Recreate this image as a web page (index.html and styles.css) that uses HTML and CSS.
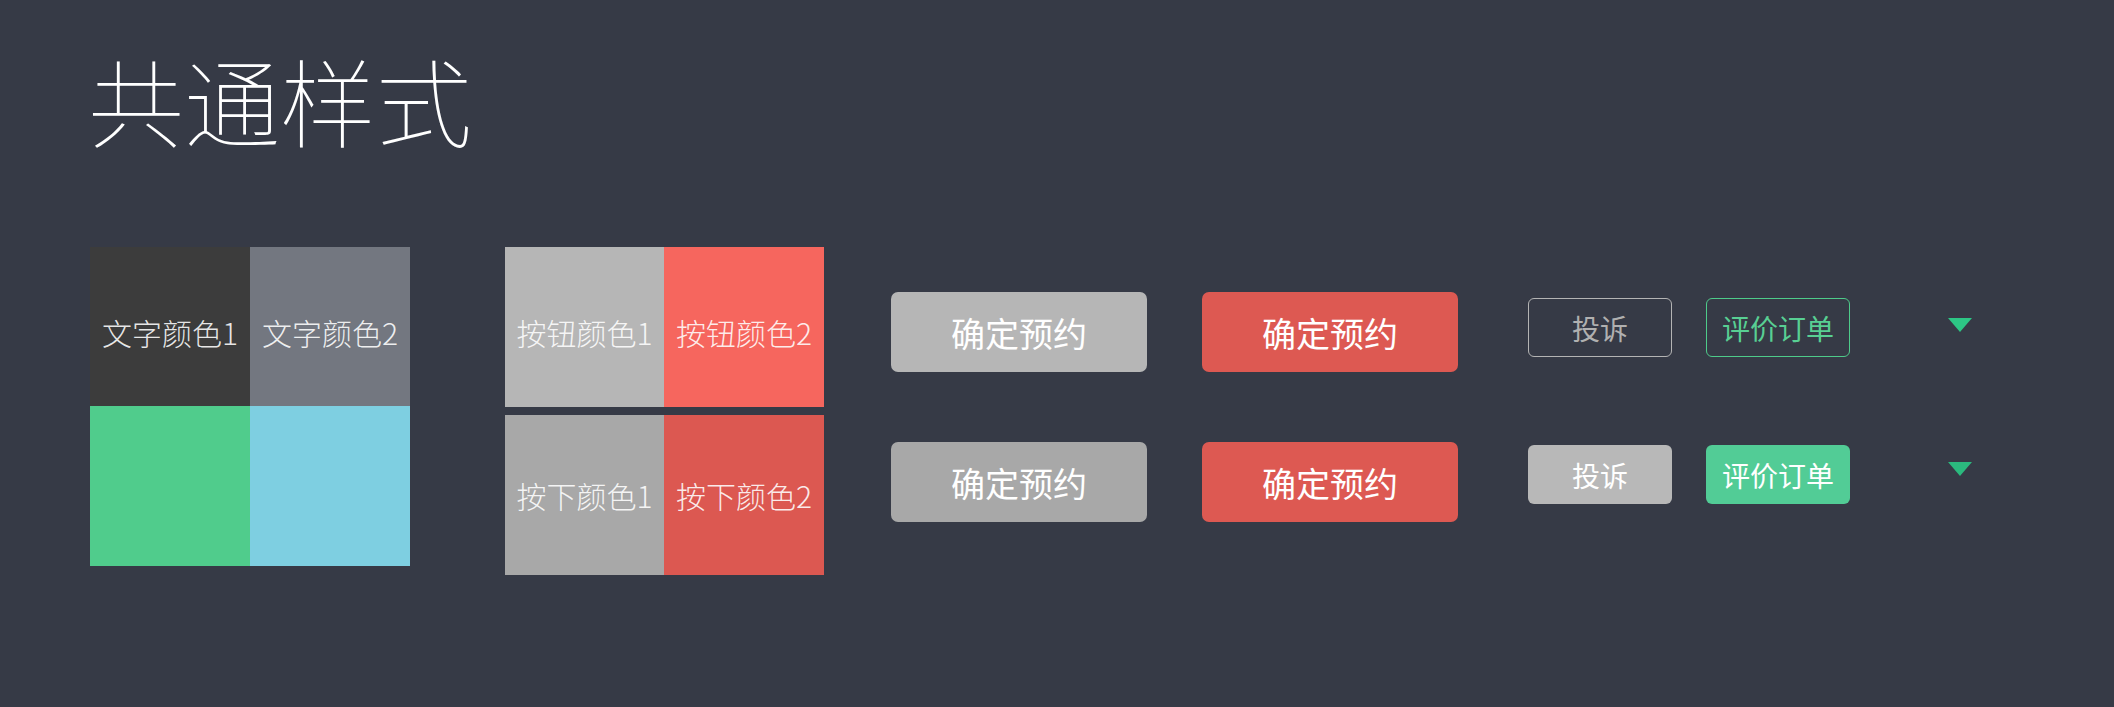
FILE: index.html
```html
<!DOCTYPE html>
<html lang="zh-CN">
<head>
<meta charset="utf-8">
<title>共通样式</title>
<link rel="stylesheet" href="styles.css">
</head>
<body>
<main class="page">
  <h1 class="title">共通样式</h1>
  <div class="board">
    <div class="swatches text-swatches">
      <div class="cell c-text1"><span>文字颜色1</span></div>
      <div class="cell c-text2"><span>文字颜色2</span></div>
      <div class="cell c-green"></div>
      <div class="cell c-blue"></div>
    </div>
    <div class="swatches btn-swatches">
      <div class="cell c-btn1 top"><span>按钮颜色1</span></div>
      <div class="cell c-btn2 top"><span>按钮颜色2</span></div>
      <div class="cell c-press1"><span>按下颜色1</span></div>
      <div class="cell c-press2"><span>按下颜色2</span></div>
    </div>
    <div class="actions">
      <div class="action-row">
        <button class="btn btn-gray">确定预约</button>
        <button class="btn btn-red">确定预约</button>
        <button class="chip chip-line-gray">投诉</button>
        <button class="chip chip-line-green">评价订单</button>
        <span class="caret"></span>
      </div>
      <div class="action-row pressed">
        <button class="btn btn-gray-dark">确定预约</button>
        <button class="btn btn-red">确定预约</button>
        <button class="chip chip-fill-gray">投诉</button>
        <button class="chip chip-fill-green">评价订单</button>
        <span class="caret caret-dark"></span>
      </div>
    </div>
  </div>
</main>
</body>
</html>
```

FILE: styles.css
```css
html, body {
  margin: 0;
  padding: 0;
  background: #363a46;
}

body {
  font-family: "Noto Sans CJK SC", "Noto Sans", sans-serif;
  color: #ffffff;
  width: 2114px;
  height: 707px;
  overflow: hidden;
}

.page {
  padding: 49px 0 0 88px;
}

.title {
  margin: 0;
  font-size: 96px;
  line-height: 100px;
  font-weight: 100;
  color: #ffffff;
  letter-spacing: 0;
}

.board {
  display: flex;
  align-items: flex-start;
  margin-top: 98px;
  margin-left: 2px;
}

.swatches {
  display: grid;
  grid-template-columns: 160px 160px;
}

.text-swatches {
  grid-template-rows: 159px 160px;
}

.btn-swatches {
  margin-left: 95px;
  grid-template-columns: 159px 160px;
  grid-template-rows: 160px 160px;
  row-gap: 8px;
}

.cell {
  display: flex;
  align-items: center;
  justify-content: center;
  font-size: 30px;
  font-weight: 300;
  color: rgba(255, 255, 255, 0.88);
  white-space: nowrap;
}

.text-swatches .cell span,
.btn-swatches .top span {
  padding-top: 10px;
}

.c-text1 { background: #3c3c3c; }
.c-text2 { background: #737780; }
.c-green { background: #50cc8c; }
.c-blue { background: #7ecfe1; }
.c-btn1 { background: #b6b6b6; }
.c-btn2 { background: #f6665e; }
.c-press1 { background: #a8a8a8; }
.c-press2 { background: #dc5851; }

.actions {
  margin-left: 67px;
  margin-top: 45px;
  display: flex;
  flex-direction: column;
  gap: 70px;
}

.action-row {
  display: flex;
  align-items: flex-start;
}

button {
  font-family: inherit;
  border: none;
  padding: 0;
  margin: 0;
  cursor: pointer;
}

.btn {
  width: 256px;
  height: 80px;
  border-radius: 7px;
  font-size: 34px;
  font-weight: 400;
  color: #ffffff;
  display: flex;
  align-items: center;
  justify-content: center;
}

.btn + .btn {
  margin-left: 55px;
}

.btn-gray { background: #b6b6b6; }
.btn-gray-dark { background: #a8a8a8; }
.btn-red { background: #dd5952; }

.chip {
  width: 144px;
  height: 59px;
  border-radius: 6px;
  font-size: 28px;
  font-weight: 400;
  display: flex;
  align-items: center;
  justify-content: center;
  box-sizing: border-box;
  margin-top: 6px;
}

.btn + .chip {
  margin-left: 70px;
}

.chip + .chip {
  margin-left: 34px;
}

.chip-line-gray {
  background: transparent;
  border: 1.5px solid #b4b4b4;
  color: #b0b0b0;
}

.chip-line-green {
  background: transparent;
  border: 1.5px solid #4ecb8a;
  color: #58cf93;
}

.chip-fill-gray {
  background: #b8b8b8;
  color: #ffffff;
}

.chip-fill-green {
  background: #52cc96;
  color: #ffffff;
}

.pressed .chip {
  margin-top: 3px;
}

.caret {
  width: 0;
  height: 0;
  margin-left: 98px;
  margin-top: 26px;
  border-left: 12px solid transparent;
  border-right: 12px solid transparent;
  border-top: 14px solid #2dc685;
}

.pressed .caret {
  margin-top: 20px;
}

.caret-dark {
  border-top-color: #2bb97e;
}
```
